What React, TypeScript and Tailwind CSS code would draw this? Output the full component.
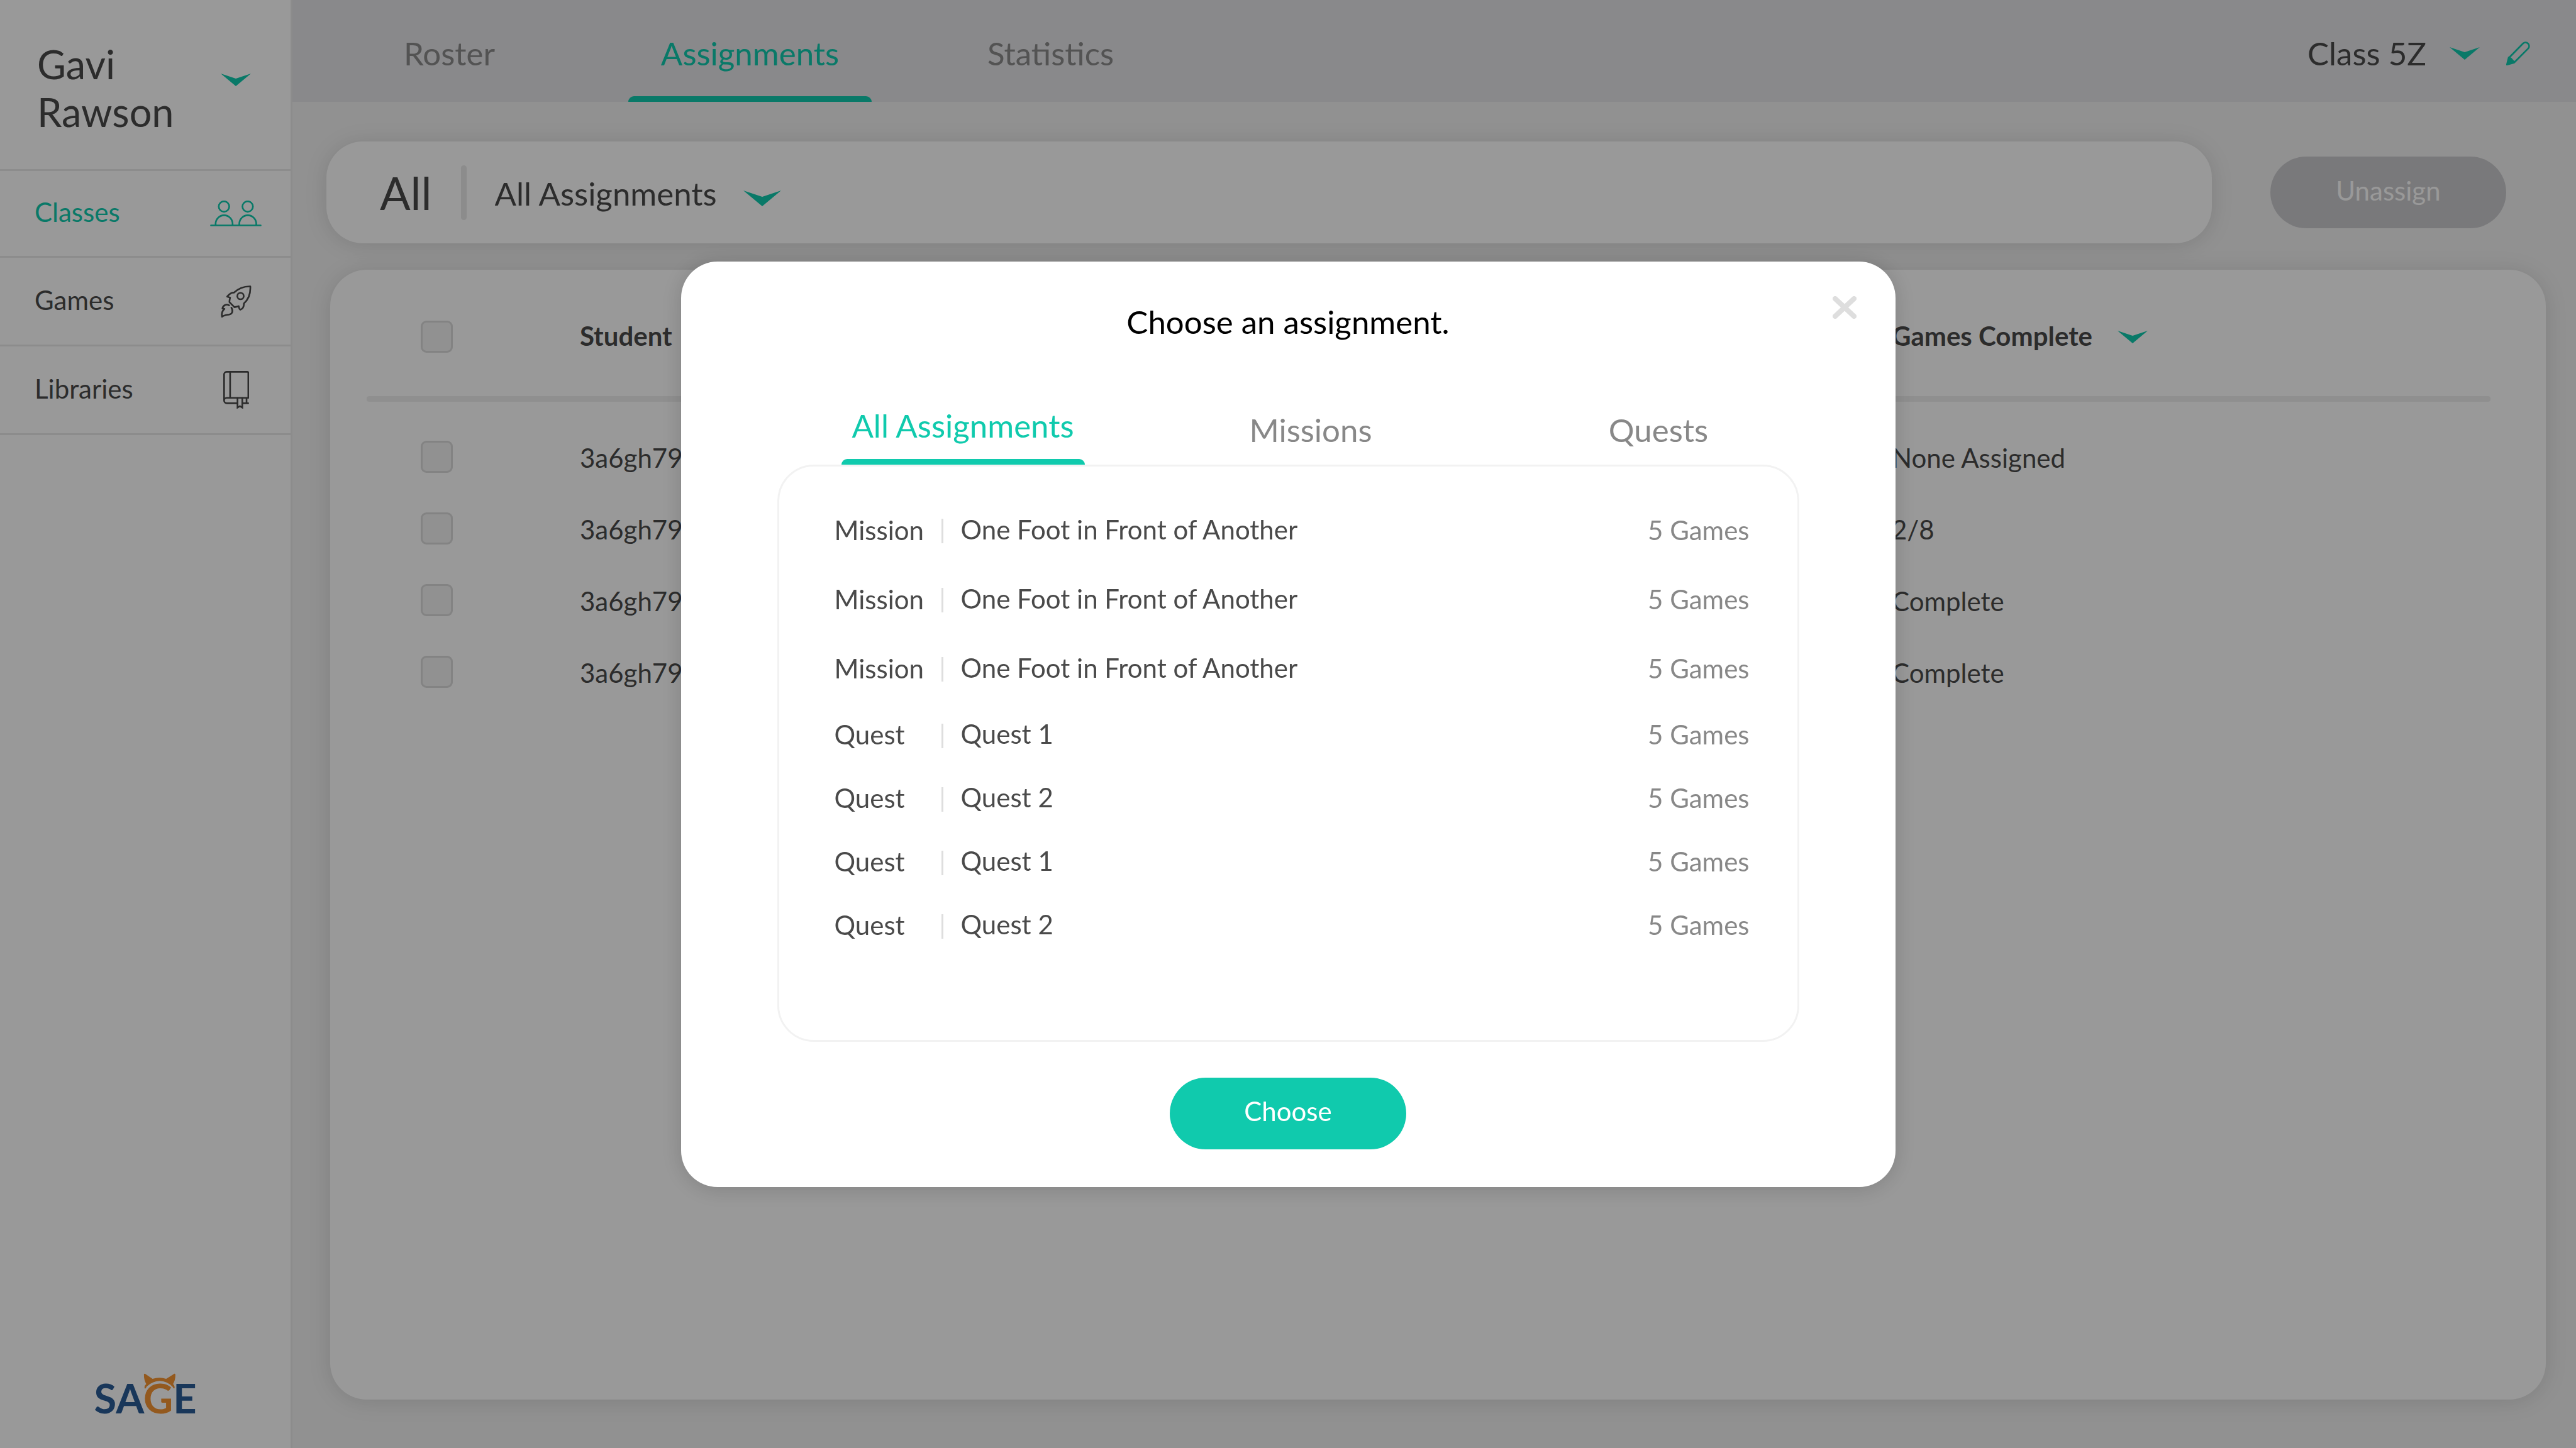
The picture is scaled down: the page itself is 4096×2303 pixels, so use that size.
import React from 'react';

function Chevron({ className }: { className: string }) {
  return (
    <svg viewBox="0 0 48 20" className={className} fill="currentColor" aria-hidden="true">
      <path d="M0 0 24 8 48 0 24 20Z" />
    </svg>
  );
}

function ClassesIcon() {
  return (
    <svg viewBox="13 30 245 123" className="h-[41px] w-[82px]" fill="none" stroke="currentColor" strokeWidth="8" strokeLinecap="round" aria-hidden="true">
      <circle cx="79" cy="58.500" r="25" />
      <circle cx="192" cy="58.500" r="25" />
      <path d="M39 147V141a40.500 41 0 0 1 81 0V147M152 147V141a40.500 41 0 0 1 81 0V147M17 148.500H254" />
    </svg>
  );
}

function RocketIcon() {
  return (
    <svg viewBox="59 434 151 159" className="h-[53px] w-[50px]" fill="none" stroke="currentColor" strokeWidth="8" strokeLinecap="round" strokeLinejoin="round" aria-hidden="true">
      <path d="M204 441C175 440 148 450 125 471 113 469 103 478 93 490L107 495C105 503 103 510 104 517L128 541 148 536C150 543 149 549 156 553 167 549 174 540 173 523 193 506 206 480 204 441Z" />
      <circle cx="157" cy="487.500" r="15.500" />
      <path d="M102 532C92 525 74 529 70 547L80 549C69 558 65 571 68 587 78 578 90 578 103 576 119 573 122 558 113 543" />
    </svg>
  );
}

function BookIcon() {
  return (
    <svg viewBox="73 847 124 181" className="h-[60px] w-[41px]" fill="none" stroke="currentColor" strokeWidth="8" strokeLinecap="round" strokeLinejoin="round" aria-hidden="true">
      <path d="M77 990V863a12 12 0 0 1 12-12H189a4.500 4.500 0 0 1 4.500 4.500V976H90a13 13 0 0 0 0 26H138M106 851V975M168 1002H193M185 977V1001" />
      <path d="M141.500 977V1023L153 1016 164.500 1023V977" strokeLinejoin="miter" />
    </svg>
  );
}

function PencilIcon() {
  return (
    <svg viewBox="1040 113 113 113" className="size-[38px]" fill="none" stroke="currentColor" strokeWidth="8" strokeLinejoin="round" aria-hidden="true">
      <path d="M1055 188 1120 122A17 17 0 0 1 1144 146L1079 211" />
      <path d="M1040 221 1049 185 1056 184 1065 191 1077 204 1082 212 1080 216 1045 226Q1039 226 1040 221Z" fill="currentColor" stroke="none" />
    </svg>
  );
}

function Logo() {
  return (
    <svg viewBox="0 0 184 96" className="h-[96px] w-[184px]" role="img" aria-label="SAGE">
      <text x="92" y="71" textAnchor="middle" fontFamily="Lato, sans-serif" fontWeight="700" fontSize="65" fill="#2a5d96">
        SA<tspan fill="#f69433">G</tspan>E
      </text>
      <path
        transform="translate(-3 -8) scale(0.333)"
        fill="#f69433"
        d="M279 50Q282 44 288 50L320 72Q352 62 385 72L420 50Q426 44 429 51Q430 76 418 97Q429 106 424 118Q420 119 416 110Q389 83 354 82Q320 83 292 109Q288 120 283 118Q278 107 290 97Q278 76 279 50Z"
      />
    </svg>
  );
}

const navItems = [
  { label: 'Classes', icon: <ClassesIcon />, active: true },
  { label: 'Games', icon: <RocketIcon />, active: false },
  { label: 'Libraries', icon: <BookIcon />, active: false },
];

function Sidebar() {
  return (
    <aside className="flex w-[465px] shrink-0 flex-col border-r-[3px] border-[#e9e9e9] bg-white">
      <button type="button" aria-haspopup="menu" className="flex h-[272px] items-start justify-between border-b-[3px] border-[#e9e9e9] pt-[64px] pr-[63px] pl-[59px] text-left">
        <span className="w-[240px] text-[63px] leading-[76px]">Gavi Rawson</span>
        <Chevron className="mt-[53px] h-[20px] w-[48px] text-[#10caad]" />
      </button>
      <nav className="flex flex-col">
        {navItems.map((item) => (
          <a
            key={item.label}
            href={'#' + item.label.toLowerCase()}
            className={
              item.active
                ? 'flex h-[138px] items-center justify-between border-b-[3px] border-[#e9e9e9] pr-[46px] pl-[55px] text-[#10caad]'
                : 'flex h-[141px] items-center justify-between border-b-[3px] border-[#e9e9e9] pr-[46px] pl-[55px]'
            }
          >
            <span className="pb-[5px] text-[42px] leading-[52px]">{item.label}</span>
            <span className="flex w-[82px] justify-center">{item.icon}</span>
          </a>
        ))}
      </nav>
      <div className="mt-auto flex justify-center pb-[30px]">
        <Logo />
      </div>
    </aside>
  );
}

function TopBar() {
  return (
    <header className="flex h-[162px] items-stretch justify-between bg-[#e4e4e8] pr-[73px] pl-[56px]">
      <nav className="flex gap-[91px] text-[51px] leading-[60px] text-[#8a8a8a]">
        <a href="#roster" className="flex w-[387px] items-center justify-center pt-[7px]">Roster</a>
        <a href="#assignments" aria-current="page" className="relative flex w-[387px] items-center justify-center pt-[7px] text-[#10caad]">
          Assignments
          <span className="absolute inset-x-0 bottom-0 h-[9px] rounded-t-[9px] bg-[#10caad]" />
        </a>
        <a href="#statistics" className="flex w-[387px] items-center justify-center pt-[7px]">Statistics</a>
      </nav>
      <div className="flex items-center pt-[7px]">
        <select aria-label="Class" className="appearance-none text-[51px] leading-[60px]">
          <option>Class 5Z</option>
        </select>
        <Chevron className="ml-[37px] h-[20px] w-[48px] text-[#10caad]" />
        <button type="button" aria-label="Edit class" className="ml-[42px] text-[#10caad]">
          <PencilIcon />
        </button>
      </div>
    </header>
  );
}

function Tick({ label }: { label: string }) {
  return (
    <input
      type="checkbox"
      aria-label={label}
      className="block size-[51px] appearance-none rounded-[9px] border-[3px] border-[#dadada] bg-[#f2f2f2]"
    />
  );
}

const students = [
  { id: '3a6gh79', games: 'None Assigned' },
  { id: '3a6gh79', games: '2/8' },
  { id: '3a6gh79', games: 'Complete' },
  { id: '3a6gh79', games: 'Complete' },
];

function StudentTable() {
  return (
    <section className="mt-[42px] flex-1 rounded-[58px] bg-white pr-[88px] pl-[58px] shadow-[0_3px_36px_rgba(0,0,0,0.12)]">
      <table className="w-full table-fixed text-left text-[42px] leading-[52px]">
        <colgroup>
          <col className="w-[339px]" />
          <col />
          <col className="w-[952px]" />
        </colgroup>
        <thead>
          <tr className="h-[201px]">
            <th className="pt-[12px] pl-[86px]">
              <Tick label="Select all students" />
            </th>
            <th className="pt-[8px] font-bold">Student</th>
            <th className="pt-[8px] font-bold">
              <span className="flex items-center gap-[40px]">
                Games Complete
                <Chevron className="mt-1 h-[20px] w-[48px] text-[#10caad]" />
              </span>
            </th>
          </tr>
          <tr>
            <td colSpan={3} className="pb-[30px]">
              <div className="h-[9px] rounded-[4px] bg-[#efefef]" />
            </td>
          </tr>
        </thead>
        <tbody>
          {students.map((s, i) => (
            <tr key={i} className="h-[114px]">
              <td className="pl-[86px]">
                <Tick label={'Select student ' + (i + 1)} />
              </td>
              <td className="pt-[4px]">{s.id}</td>
              <td className="pt-[4px]">{s.games}</td>
            </tr>
          ))}
        </tbody>
      </table>
    </section>
  );
}

function Content() {
  return (
    <div className="flex flex-1 flex-col pt-[63px] pr-[48px] pb-[77px] pl-[60px]">
      <div className="-ml-[6px] flex items-center justify-between pr-[63px]">
        <div className="mr-[93px] flex h-[162px] flex-1 items-center rounded-[58px] bg-white pl-[85px] shadow-[0_3px_36px_rgba(0,0,0,0.12)]">
          <h1 className="text-[72px] leading-[86px]">All</h1>
          <span className="ml-[46px] h-[87px] w-[9px] rounded-full bg-[#e9e9e9]" />
          <select aria-label="Assignment filter" className="ml-[45px] appearance-none pt-[3px] text-[51px] leading-[60px]">
            <option>All Assignments</option>
          </select>
          <Chevron className="mt-[18px] ml-[40px] h-[25px] w-[60px] text-[#10caad]" />
        </div>
        <button type="button" className="h-[114px] w-[375px] rounded-full bg-[#cacacd] pb-[7px] text-[42px] leading-[52px] text-white">
          Unassign
        </button>
      </div>
      <StudentTable />
    </div>
  );
}

const assignments = [
  { kind: 'Mission', name: 'One Foot in Front of Another' },
  { kind: 'Mission', name: 'One Foot in Front of Another' },
  { kind: 'Mission', name: 'One Foot in Front of Another' },
  { kind: 'Quest', name: 'Quest 1' },
  { kind: 'Quest', name: 'Quest 2' },
  { kind: 'Quest', name: 'Quest 1' },
  { kind: 'Quest', name: 'Quest 2' },
];

function AssignmentDialog() {
  return (
    <div className="fixed inset-0 flex items-center justify-center bg-black/40">
      <div
        role="dialog"
        aria-modal="true"
        aria-labelledby="dialog-title"
        className="relative flex w-[1931px] flex-col items-center rounded-[58px] bg-white px-[153px] pb-[60px] shadow-[0_3px_36px_rgba(0,0,0,0.16)]"
      >
        <h2 id="dialog-title" className="pt-[66px] text-[51px] leading-[60px] text-black">Choose an assignment.</h2>
        <button type="button" aria-label="Close" className="absolute top-[55px] right-[62px] text-[#dedede]">
          <svg viewBox="0 0 38 36" className="h-[36px] w-[38px]" stroke="currentColor" strokeWidth="8" strokeLinecap="round" aria-hidden="true">
            <path d="M4 4 34 32M34 4 4 32" />
          </svg>
        </button>
        <div role="tablist" className="mt-[98px] flex h-[99px] w-full gap-[166px] pl-[102px] text-[51px] leading-[60px] text-[#888888]">
          <button type="button" role="tab" aria-selected="true" className="relative w-[387px] pb-[24px] text-[#10caad]">
            All Assignments
            <span className="absolute inset-x-0 bottom-0 h-[9px] rounded-t-[9px] bg-[#10caad]" />
          </button>
          <button type="button" role="tab" aria-selected="false" className="w-[387px] pb-[11px]">Missions</button>
          <button type="button" role="tab" aria-selected="false" className="w-[387px] pb-[11px]">Quests</button>
        </div>
        <ul className="w-full rounded-[58px] border-[3px] border-[#f2f2f2] pt-[48px] pr-[76px] pb-[130px] pl-[88px] text-[42px] leading-[52px]">
          {assignments.map((a, i) => (
            <li key={i}>
              <button
                type="button"
                className={a.kind === 'Mission' ? 'flex h-[110px] w-full items-center text-left' : 'flex h-[101px] w-full items-center text-left'}
              >
                <span className="w-[170px] pb-[4px]">{a.kind}</span>
                <span className="h-[39px] w-[3px] bg-[#dedede]" />
                <span className="flex-1 pb-[6px] pl-[28px]">{a.name}</span>
                <span className="pb-[4px] text-[#888888]">5 Games</span>
              </button>
            </li>
          ))}
        </ul>
        <button type="button" className="mt-[57px] h-[114px] w-[376px] rounded-full bg-[#10caad] pb-[7px] text-[42px] leading-[52px] text-white">
          Choose
        </button>
      </div>
    </div>
  );
}

export default function App() {
  return (
    <div className="flex min-h-screen bg-[#f2f2f2] font-['Lato',sans-serif] text-[#4a4a4a]">
      <Sidebar />
      <main className="flex flex-1 flex-col">
        <TopBar />
        <Content />
      </main>
      <AssignmentDialog />
    </div>
  );
}
